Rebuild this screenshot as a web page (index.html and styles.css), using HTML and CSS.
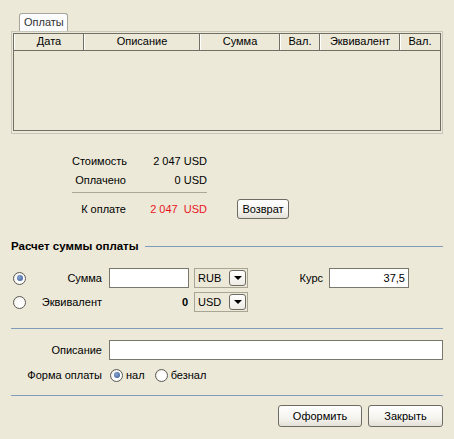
FILE: index.html
```html
<!DOCTYPE html>
<html lang="ru">
<head>
<meta charset="utf-8">
<title>Оплаты</title>
<link rel="stylesheet" href="styles.css">
</head>
<body>
<div class="win">
  <div class="tabs"><div class="tab">Оплаты</div></div>
  <div class="panel">
    <div class="grid">
      <div class="ghead">
        <div class="gh c1">Дата</div>
        <div class="gh c2">Описание</div>
        <div class="gh c3">Сумма</div>
        <div class="gh c4">Вал.</div>
        <div class="gh c5">Эквивалент</div>
        <div class="gh c6">Вал.</div>
      </div>
    </div>
  </div>

  <div class="summary">
    <div class="srow r1"><span class="sl">Стоимость</span><span class="sv">2 047 USD</span></div>
    <div class="srow r2"><span class="sl">Оплачено</span><span class="sv">0 USD</span></div>
    <div class="ssep"></div>
    <div class="srow r3"><span class="sl">К оплате</span><span class="sv red">2 047&nbsp;&nbsp;USD</span><button class="btn sbtn">Возврат</button></div>
  </div>

  <div class="section"><span class="stitle">Расчет суммы оплаты</span><span class="sline"></span></div>

  <div class="frow f1">
    <span class="radio checked"></span>
    <span class="flabel">Сумма</span>
    <span class="input sum"></span>
    <span class="combo"><span class="ctext">RUB</span><span class="cbtn"><span class="tri"></span></span></span>
    <span class="klabel">Курс</span>
    <span class="input rate">37,5</span>
  </div>
  <div class="frow f2">
    <span class="radio"></span>
    <span class="flabel">Эквивалент</span>
    <span class="zero">0</span>
    <span class="combo"><span class="ctext">USD</span><span class="cbtn"><span class="tri"></span></span></span>
  </div>

  <div class="hr hr1"></div>

  <div class="drow">
    <span class="dlabel">Описание</span>
    <span class="input desc"></span>
  </div>
  <div class="prow">
    <span class="dlabel">Форма оплаты</span>
    <span class="radio checked"></span><span class="ropt">нал</span>
    <span class="radio"></span><span class="ropt">безнал</span>
  </div>

  <div class="hr hr2"></div>

  <div class="actions">
    <button class="btn b1">Оформить</button>
    <button class="btn b2">Закрыть</button>
  </div>
</div>
</body>
</html>
```

FILE: styles.css
```css
html, body {
  margin: 0;
  padding: 0;
  background: #ECE9D8;
}
body {
  font-family: "Liberation Sans", Arial, sans-serif;
  font-size: 11px;
  color: #000;
  width: 454px;
  height: 439px;
  overflow: hidden;
}
.win {
  display: flex;
  flex-direction: column;
}

/* tabs */
.tabs {
  display: flex;
  padding-left: 19px;
  margin-top: 13px;
  height: 18px;
}
.tab {
  width: 49px;
  height: 18px;
  box-sizing: border-box;
  border: 1px solid #A7A69A;
  border-bottom: none;
  border-radius: 3px 3px 0 0;
  background: #FCFCFE;
  color: #333;
  padding-left: 4px;
  line-height: 17px;
  margin-bottom: -1px;
  position: relative;
  z-index: 1;
}
.panel {
  margin-left: 11px;
  width: 432px;
  height: 103px;
  box-sizing: border-box;
  border: 1px solid #C9C7BA;
  padding: 1px 1px 2px 1px;
}
.grid {
  width: 428px;
  height: 98px;
  box-sizing: border-box;
  border: 1px solid #716F64;
  background: #ECE9D8;
}
.ghead {
  display: flex;
  height: 16px;
  border-bottom: 1px solid #716F64;
}
.gh {
  box-sizing: border-box;
  height: 16px;
  line-height: 15px;
  text-align: center;
  border-left: 1px solid #FFFFFF;
  border-right: 1px solid #716F64;
  color: #000;
}
.c1 { width: 70px; }
.c2 { width: 116px; }
.c3 { width: 80px; }
.c4 { width: 40px; }
.c5 { width: 80px; }
.c6 { width: 39px; border-right: none; }

/* summary */
.summary {
  display: flex;
  flex-direction: column;
  margin-left: 72px;
}
.srow {
  display: flex;
  align-items: center;
  height: 14px;
  line-height: 14px;
}
.r1 { margin-top: 20px; }
.r2 { margin-top: 5px; }
.r3 { margin-top: 6px; height: 20px; }
.sl {
  width: 54px;
  text-align: right;
}
.sv {
  width: 81px;
  text-align: right;
}
.red { color: #E8151F; }
.ssep {
  margin-top: 5px;
  width: 135px;
  height: 1px;
  background: #ACA899;
}

/* buttons */
.btn {
  font-family: "Liberation Sans", Arial, sans-serif;
  font-size: 11px;
  color: #000;
  box-sizing: border-box;
  border: 1px solid #6E6C62;
  border-radius: 3px;
  background: linear-gradient(#FFFFFF 0%, #F5F4EF 60%, #E3E0D6 100%);
  padding: 0;
  margin: 0;
}
.sbtn {
  margin-left: 30px;
  width: 52px;
  height: 20px;
}

/* section */
.section {
  display: flex;
  align-items: center;
  margin-top: 20px;
  height: 14px;
  padding-left: 11px;
  padding-right: 11px;
}
.stitle {
  font-weight: bold;
  font-size: 11.5px;
  white-space: nowrap;
}
.sline {
  flex: 1;
  height: 1px;
  margin-left: 6px;
  background: #7F9DB9;
}

/* form rows */
.frow {
  display: flex;
  align-items: center;
  height: 20px;
  padding-left: 13px;
}
.f1 { margin-top: 15px; }
.f2 { margin-top: 4px; }
.radio {
  width: 13px;
  height: 13px;
  box-sizing: border-box;
  border: 1px solid #5B5A55;
  border-radius: 50%;
  background: radial-gradient(circle at 60% 60%, #FFFFFF 40%, #E4E2D8 100%);
  display: flex;
  align-items: center;
  justify-content: center;
  flex: none;
}
.radio.checked::after {
  content: "";
  width: 6px;
  height: 6px;
  border-radius: 50%;
  background: radial-gradient(circle at 40% 40%, #8AA6D2 0%, #4A6CA4 70%);
}
.flabel {
  width: 76px;
  text-align: right;
  margin-right: 7px;
}
.input {
  box-sizing: border-box;
  height: 20px;
  border: 1px solid #7A786C;
  background: #FFFFFF;
  line-height: 18px;
  flex: none;
}
.sum { width: 80px; }
.rate {
  width: 80px;
  text-align: right;
  padding-right: 3px;
}
.zero {
  width: 80px;
  text-align: right;
  font-weight: bold;
  padding-right: 1px;
  box-sizing: border-box;
}
.combo {
  margin-left: 5px;
  width: 54px;
  height: 20px;
  box-sizing: border-box;
  border: 1px solid #A9A594;
  background: #ECE9D8;
  display: flex;
  align-items: center;
  justify-content: space-between;
  padding: 1px;
}
.ctext {
  padding-left: 2px;
}
.cbtn {
  width: 17px;
  height: 16px;
  box-sizing: border-box;
  border: 1px solid #6E6C62;
  border-radius: 3px;
  background: linear-gradient(#FFFFFF, #EEECE4);
  display: flex;
  align-items: center;
  justify-content: center;
}
.tri {
  width: 0;
  height: 0;
  border-left: 4px solid transparent;
  border-right: 4px solid transparent;
  border-top: 4px solid #000;
}
.klabel {
  margin-left: 25px;
  width: 50px;
  text-align: right;
  margin-right: 6px;
}

.hr {
  height: 1px;
  margin: 0 11px;
  background: #7F9DB9;
}
.hr1 { margin-top: 16px; }

.drow {
  display: flex;
  align-items: center;
  margin-top: 11px;
  height: 20px;
  padding-left: 11px;
}
.dlabel {
  width: 91px;
  text-align: right;
  margin-right: 7px;
}
.desc { width: 334px; }

.prow {
  display: flex;
  align-items: center;
  margin-top: 8px;
  height: 14px;
  padding-left: 11px;
}
.prow .dlabel { margin-right: 8px; }
.ropt {
  margin-left: 3px;
  margin-right: 10px;
}
.hr2 { margin-top: 13px; }

.actions {
  display: flex;
  justify-content: flex-end;
  gap: 6px;
  margin-top: 9px;
  padding-right: 11px;
}
.b1 { width: 84px; height: 22px; }
.b2 { width: 75px; height: 22px; }
```
